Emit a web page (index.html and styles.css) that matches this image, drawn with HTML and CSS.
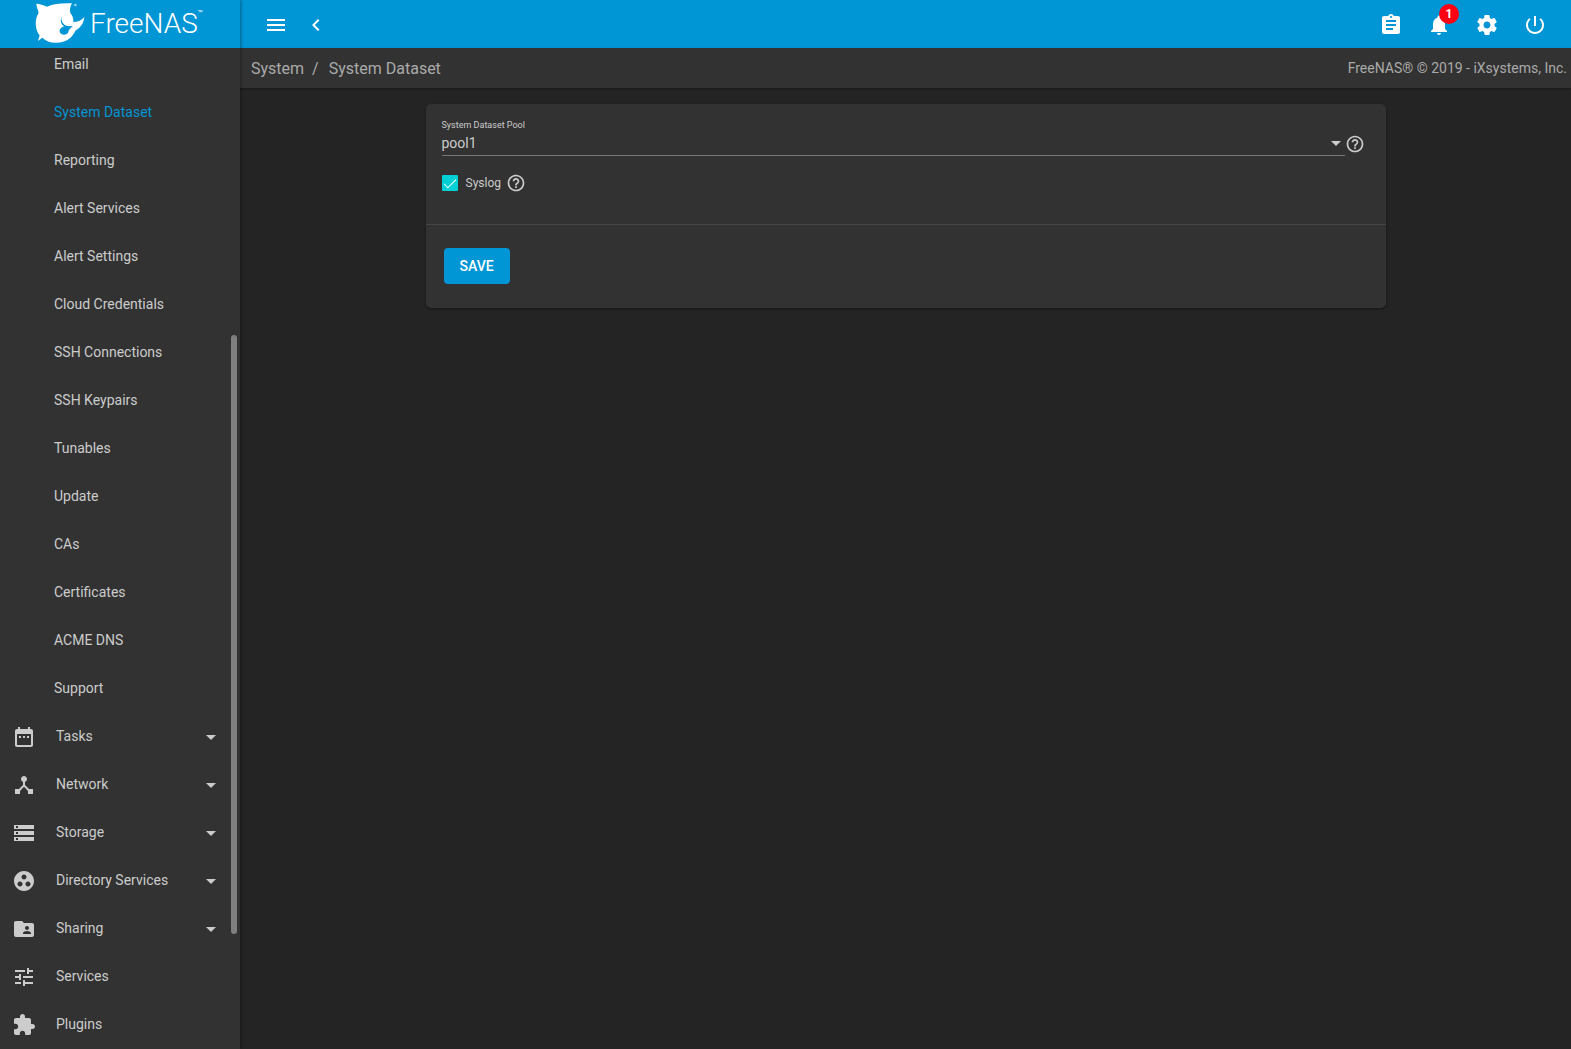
FILE: index.html
```html
<!DOCTYPE html>
<html lang="en">
<head>
<meta charset="utf-8">
<meta name="viewport" content="width=device-width, initial-scale=1">
<title>FreeNAS - System Dataset</title>
<link rel="stylesheet" href="styles.css">
</head>
<body>
<svg class="sprite" aria-hidden="true">
  <symbol id="caret" viewBox="0 0 24 24"><path d="M7 10l5 5 5-5z"/></symbol>
  <symbol id="help" viewBox="0 0 24 24"><path d="M11 18h2v-2h-2v2zm1-16C6.480 2 2 6.480 2 12s4.480 10 10 10 10-4.480 10-10S17.520 2 12 2zm0 18c-4.410 0-8-3.590-8-8s3.590-8 8-8 8 3.590 8 8-3.590 8-8 8zm0-14c-2.210 0-4 1.790-4 4h2c0-1.100.9-2 2-2s2 .9 2 2c0 2-3 1.750-3 5h2c0-2.250 3-2.500 3-5 0-2.210-1.790-4-4-4z"/></symbol>
</svg>
<div class="app">
  <aside class="sidebar">
    <a class="brand" href="#" aria-label="FreeNAS home">
      <svg class="brand-mark" viewBox="0 0 162 144" aria-hidden="true">
        <path d="M7 11C16 12 28 14 39 20C58 11 84 9 114 10C108 20 107 30 109 39C116 47 119 57 118 66C132 66 142 61 151 51C149 68 142 82 124 92C115 112 98 128 66 128C48 128 34 122 25 113L12 123L17 106C3 90 1 58 14 38C11 28 8 20 7 11Z"/>
        <path class="brand-cut" d="M83 50C80 62 87 74 100 78L117 79C109 84 104 89 102 99C94 107 80 105 77 95C76 87 83 81 91 79C80 72 78 60 83 50Z"/>
        <circle cx="124" cy="15" r="4" opacity=".6"/>
      </svg>
      <span class="brand-name">FreeNAS</span><span class="brand-tm">™</span>
    </a>
    <nav class="nav" aria-label="Main">
      <ul class="nav-list">
        <li><a class="sub" href="#">Email</a></li>
        <li><a class="sub active" href="#" aria-current="page">System Dataset</a></li>
        <li><a class="sub" href="#">Reporting</a></li>
        <li><a class="sub" href="#">Alert Services</a></li>
        <li><a class="sub" href="#">Alert Settings</a></li>
        <li><a class="sub" href="#">Cloud Credentials</a></li>
        <li><a class="sub" href="#">SSH Connections</a></li>
        <li><a class="sub" href="#">SSH Keypairs</a></li>
        <li><a class="sub" href="#">Tunables</a></li>
        <li><a class="sub" href="#">Update</a></li>
        <li><a class="sub" href="#">CAs</a></li>
        <li><a class="sub" href="#">Certificates</a></li>
        <li><a class="sub" href="#">ACME DNS</a></li>
        <li><a class="sub" href="#">Support</a></li>
        <li><a class="top" href="#"><svg class="icon" viewBox="0 0 24 24"><path d="M9 11H7v2h2v-2zm4 0h-2v2h2v-2zm4 0h-2v2h2v-2zm2-7h-1V2h-2v2H8V2H6v2H5c-1.110 0-1.990.9-1.990 2L3 20c0 1.100.89 2 2 2h14c1.100 0 2-.9 2-2V6c0-1.100-.9-2-2-2zm0 16H5V9h14v11z"/></svg><span>Tasks</span><svg class="icon"><use href="#caret"/></svg></a></li>
        <li><a class="top" href="#"><svg class="icon" viewBox="0 0 24 24"><path d="M17 16l-4-4V8.820C14.160 8.400 15 7.300 15 6c0-1.660-1.340-3-3-3S9 4.340 9 6c0 1.300.84 2.400 2 2.820V12l-4 4H3v5h5v-3.050l4-4.200 4 4.200V21h5v-5h-4z"/></svg><span>Network</span><svg class="icon"><use href="#caret"/></svg></a></li>
        <li><a class="top" href="#"><svg class="icon" viewBox="0 0 24 24"><path d="M2 20h20v-4H2v4zm2-3h2v2H4v-2zM2 4v4h20V4H2zm4 3H4V5h2v2zm-4 7h20v-4H2v4zm2-3h2v2H4v-2z"/></svg><span>Storage</span><svg class="icon"><use href="#caret"/></svg></a></li>
        <li><a class="top" href="#"><svg class="icon" viewBox="0 0 24 24"><path d="M12 2C6.480 2 2 6.480 2 12s4.480 10 10 10 10-4.480 10-10S17.520 2 12 2zM8 17.500c-1.380 0-2.500-1.120-2.500-2.500s1.120-2.500 2.500-2.500 2.500 1.120 2.500 2.500-1.120 2.500-2.500 2.500zM9.500 8c0-1.380 1.120-2.500 2.500-2.500s2.500 1.120 2.500 2.500-1.120 2.500-2.500 2.500S9.500 9.380 9.500 8zm6.500 9.500c-1.380 0-2.500-1.120-2.500-2.500s1.120-2.500 2.500-2.500 2.500 1.120 2.500 2.500-1.120 2.500-2.500 2.500z"/></svg><span>Directory Services</span><svg class="icon"><use href="#caret"/></svg></a></li>
        <li><a class="top" href="#"><svg class="icon" viewBox="0 0 24 24"><path d="M20 6h-8l-2-2H4c-1.100 0-1.990.9-1.990 2L2 18c0 1.100.9 2 2 2h16c1.100 0 2-.9 2-2V8c0-1.100-.9-2-2-2zm-5 3c1.100 0 2 .9 2 2s-.9 2-2 2-2-.9-2-2 .9-2 2-2zm4 8h-8v-1c0-1.330 2.670-2 4-2s4 .67 4 2v1z"/></svg><span>Sharing</span><svg class="icon"><use href="#caret"/></svg></a></li>
        <li><a class="top" href="#"><svg class="icon" viewBox="0 0 24 24"><path d="M3 17v2h6v-2H3zM3 5v2h10V5H3zm10 16v-2h8v-2h-8v-2h-2v6h2zM7 9v2H3v2h4v2h2V9H7zm14 4v-2H11v2h10zm-6-4h2V7h4V5h-4V3h-2v6z"/></svg><span>Services</span></a></li>
        <li><a class="top" href="#"><svg class="icon" viewBox="0 0 24 24"><path d="M20.500 11H19V7c0-1.100-.9-2-2-2h-4V3.500C13 2.120 11.880 1 10.500 1S8 2.120 8 3.500V5H4c-1.100 0-1.990.9-1.990 2v3.800H3.500c1.490 0 2.700 1.210 2.700 2.700s-1.210 2.700-2.700 2.700H2V20c0 1.100.9 2 2 2h3.800v-1.500c0-1.490 1.210-2.700 2.700-2.700 1.490 0 2.700 1.210 2.700 2.700V22H17c1.100 0 2-.9 2-2v-4h1.500c1.380 0 2.500-1.120 2.500-2.500S21.880 11 20.500 11z"/></svg><span>Plugins</span></a></li>
      </ul>
      <div class="thumb"></div>
    </nav>
  </aside>
  <div class="page">
    <header class="topbar">
      <button class="bar-btn" type="button" aria-label="Toggle menu"><svg class="icon" viewBox="0 0 24 24"><path d="M3 18h18v-2H3v2zm0-5h18v-2H3v2zm0-7v2h18V6H3z"/></svg></button>
      <button class="bar-btn" type="button" aria-label="Collapse menu"><svg class="icon" viewBox="0 0 24 24"><path d="M15.410 7.410L14 6l-6 6 6 6 1.410-1.410L10.830 12z"/></svg></button>
      <div class="actions">
        <button class="bar-btn wide" type="button" aria-label="Task manager"><svg class="icon" viewBox="0 0 24 24"><path d="M19 3h-4.180C14.400 1.840 13.300 1 12 1c-1.300 0-2.400.84-2.820 2H5c-1.100 0-2 .9-2 2v14c0 1.100.9 2 2 2h14c1.100 0 2-.9 2-2V5c0-1.100-.9-2-2-2zm-7 0c.55 0 1 .45 1 1s-.45 1-1 1-1-.45-1-1 .45-1 1-1zm2 14H7v-2h7v2zm3-4H7v-2h10v2zm0-4H7V7h10v2z"/></svg></button>
        <button class="bar-btn wide" type="button" aria-label="Notifications"><svg class="icon" viewBox="0 0 24 24"><path d="M12 22c1.100 0 2-.9 2-2h-4c0 1.100.89 2 2 2zm6-6v-5c0-3.070-1.640-5.640-4.500-6.320V4c0-.83-.67-1.500-1.500-1.500s-1.500.67-1.500 1.500v.68C7.630 5.360 6 7.920 6 11v5l-2 2v1h16v-1l-2-2z"/></svg><span class="badge">1</span></button>
        <button class="bar-btn wide" type="button" aria-label="Settings"><svg class="icon" viewBox="0 0 24 24"><path d="M19.430 12.980c.04-.32.07-.64.07-.98s-.03-.66-.07-.98l2.110-1.650c.19-.15.24-.42.12-.64l-2-3.460c-.12-.22-.39-.3-.61-.22l-2.490 1c-.52-.4-1.080-.73-1.690-.98l-.38-2.650C14.460 2.180 14.250 2 14 2h-4c-.25 0-.46.18-.49.42l-.38 2.650c-.61.25-1.170.59-1.690.98l-2.490-1c-.23-.09-.49 0-.61.22l-2 3.460c-.13.22-.07.49.12.64l2.110 1.650c-.04.32-.07.65-.07.98s.03.66.07.98l-2.110 1.650c-.19.15-.24.42-.12.64l2 3.460c.12.22.39.3.61.22l2.490-1c.52.4 1.080.73 1.690.98l.38 2.650c.03.24.24.42.49.42h4c.25 0 .46-.18.49-.42l.38-2.650c.61-.25 1.170-.59 1.690-.98l2.490 1c.23.09.49 0 .61-.22l2-3.460c.12-.22.07-.49-.12-.64l-2.110-1.650zM12 15.500c-1.930 0-3.500-1.570-3.500-3.500s1.570-3.500 3.500-3.500 3.500 1.570 3.500 3.500-1.570 3.500-3.500 3.500z"/></svg></button>
        <button class="bar-btn wide" type="button" aria-label="Power"><svg class="icon" viewBox="0 0 24 24"><path d="M13 3h-2v10h2V3zm4.830 2.170l-1.420 1.420C17.990 7.860 19 9.810 19 12c0 3.870-3.130 7-7 7s-7-3.130-7-7c0-2.190 1.010-4.140 2.580-5.420L6.170 5.170C4.230 6.820 3 9.260 3 12c0 4.970 4.030 9 9 9s9-4.030 9-9c0-2.740-1.230-5.180-3.170-6.830z"/></svg></button>
      </div>
    </header>
    <div class="crumbs">
      <nav class="trail" aria-label="Breadcrumb"><a href="#">System</a><span class="slash">/</span><a href="#">System Dataset</a></nav>
      <span class="copyright">FreeNAS® © 2019 - iXsystems, Inc.</span>
    </div>
    <main class="content">
      <form class="card">
        <div class="fields">
          <div class="select-row">
            <div class="field">
              <label for="pool">System Dataset Pool</label>
              <div class="select-box">
                <select id="pool"><option>pool1</option></select>
                <svg class="caret" viewBox="0 0 10 5" aria-hidden="true"><path d="M0 0h10L5 5z"/></svg>
              </div>
            </div>
            <button class="help" type="button" aria-label="Help for pool"><svg><use href="#help"/></svg></button>
          </div>
          <div class="check-row">
            <input type="checkbox" id="syslog" checked>
            <label for="syslog">Syslog</label>
            <button class="help" type="button" aria-label="Help for syslog"><svg><use href="#help"/></svg></button>
          </div>
        </div>
        <div class="buttons"><button class="save" type="submit">SAVE</button></div>
      </form>
    </main>
  </div>
</div>
</body>
</html>
```
FILE: styles.css
```css
:root {
  --blue: #0095d5;
  --panel: #323232;
  --text: #cccccc;
}

* { box-sizing: border-box; }

body {
  margin: 0;
  background: #242424;
  color: var(--text);
  font: 14px/20px Roboto, "Liberation Sans", sans-serif;
}

button {
  border: 0;
  padding: 0;
  background: none;
  color: inherit;
  font: inherit;
  cursor: pointer;
}

a { color: inherit; text-decoration: none; }

svg { display: block; fill: currentColor; }

.sprite { display: none; }

.icon { width: 24px; height: 24px; flex: none; }

.app { display: flex; height: 100vh; }

/* Sidebar */
.sidebar {
  display: flex;
  flex-direction: column;
  flex: none;
  width: 240px;
  background: var(--panel);
  box-shadow: 1px 0 3px rgba(0, 0, 0, .35);
  z-index: 1;
}

.brand {
  display: flex;
  flex: none;
  height: 48px;
  padding-left: 34px;
  background: var(--blue);
  color: #fff;
}

.brand-mark { width: 54px; height: 48px; }

.brand-cut { fill: var(--blue); }

.brand-name { padding-left: 2px; font-size: 28px; font-weight: 300; line-height: 48px; }

.brand-tm { font-size: 8px; line-height: 28px; }

.nav { position: relative; flex: 1; overflow: hidden; }

.nav-list { margin: -8px 0 0; padding: 0; list-style: none; }

.nav-list a { display: flex; align-items: center; height: 48px; }

.nav-list .sub { padding-left: 54px; }

.active { color: var(--blue); }

.top { gap: 20px; padding: 0 17px 0 12px; }

.top span { flex: 1; }

.top .icon { margin-top: 2px; }

.thumb {
  position: absolute;
  top: 28.7%;
  right: 3px;
  width: 6px;
  height: 59.8%;
  border-radius: 3px;
  background: #7f7f7f;
}

/* Top bar */
.page { display: flex; flex: 1; flex-direction: column; min-width: 0; }

.topbar {
  display: flex;
  align-items: center;
  flex: none;
  height: 48px;
  padding: 0 12px 0 16px;
  background: var(--blue);
  color: #fff;
}

.bar-btn {
  position: relative;
  display: flex;
  align-items: center;
  justify-content: center;
  width: 40px;
  height: 48px;
  padding-top: 2px;
}

.wide { width: 48px; }

.actions { display: flex; margin-left: auto; }

.badge {
  position: absolute;
  top: 4px;
  right: 4px;
  width: 20px;
  height: 20px;
  border-radius: 50%;
  background: #ff0013;
  font-size: 12px;
  font-weight: 700;
}

/* Breadcrumb bar */
.crumbs {
  display: flex;
  align-items: center;
  justify-content: space-between;
  flex: none;
  height: 40px;
  padding: 0 4px 0 11px;
  background: var(--panel);
  color: #aaaaaa;
  box-shadow: 0 1px 2px rgba(0, 0, 0, .3);
}

.trail { display: flex; padding-top: 2px; font-size: 16px; }

.slash { padding: 0 10px 0 8px; }

/* Settings card */
.content { padding: 16px; }

.card {
  max-width: 960px;
  margin: 0 auto;
  border-radius: 5px;
  background: var(--panel);
  box-shadow: 0 1px 3px rgba(0, 0, 0, .4);
}

.fields { padding: 16px 21px 31px 16px; border-bottom: 1px solid #464646; }

.select-row { display: flex; align-items: flex-end; }

.field { flex: 1; }

.field label { display: block; font-size: 9px; line-height: 10px; }

.select-box { position: relative; border-bottom: 1px solid #777777; }

select {
  display: block;
  width: 100%;
  height: 25px;
  padding: 0;
  border: 0;
  appearance: none;
  background: transparent;
  color: inherit;
  font: inherit;
}

.caret { position: absolute; top: 11px; right: 4px; width: 10px; height: 5px; }

.help { width: 20px; height: 20px; }

.help svg { width: 20px; height: 20px; }

.select-row .help { margin-bottom: 2px; }

.check-row { display: flex; align-items: center; height: 20px; margin-top: 17px; }

.check-row label { padding: 0 5px 0 8px; font-size: 12px; }

input[type="checkbox"] {
  display: grid;
  justify-items: center;
  width: 16px;
  height: 16px;
  margin: 0;
  padding-top: 4px;
  border-radius: 1px;
  appearance: none;
  background: #00d0d6;
}

input[type="checkbox"]:checked::before {
  content: "";
  width: 11px;
  height: 5px;
  border: solid #fff;
  border-width: 0 0 1px 1px;
  transform: rotate(-45deg);
}

.buttons { padding: 23px 18px 24px; }

.save {
  height: 36px;
  padding: 0 16px;
  border-radius: 4px;
  background: var(--blue);
  color: #fff;
  font-weight: 500;
}
```
